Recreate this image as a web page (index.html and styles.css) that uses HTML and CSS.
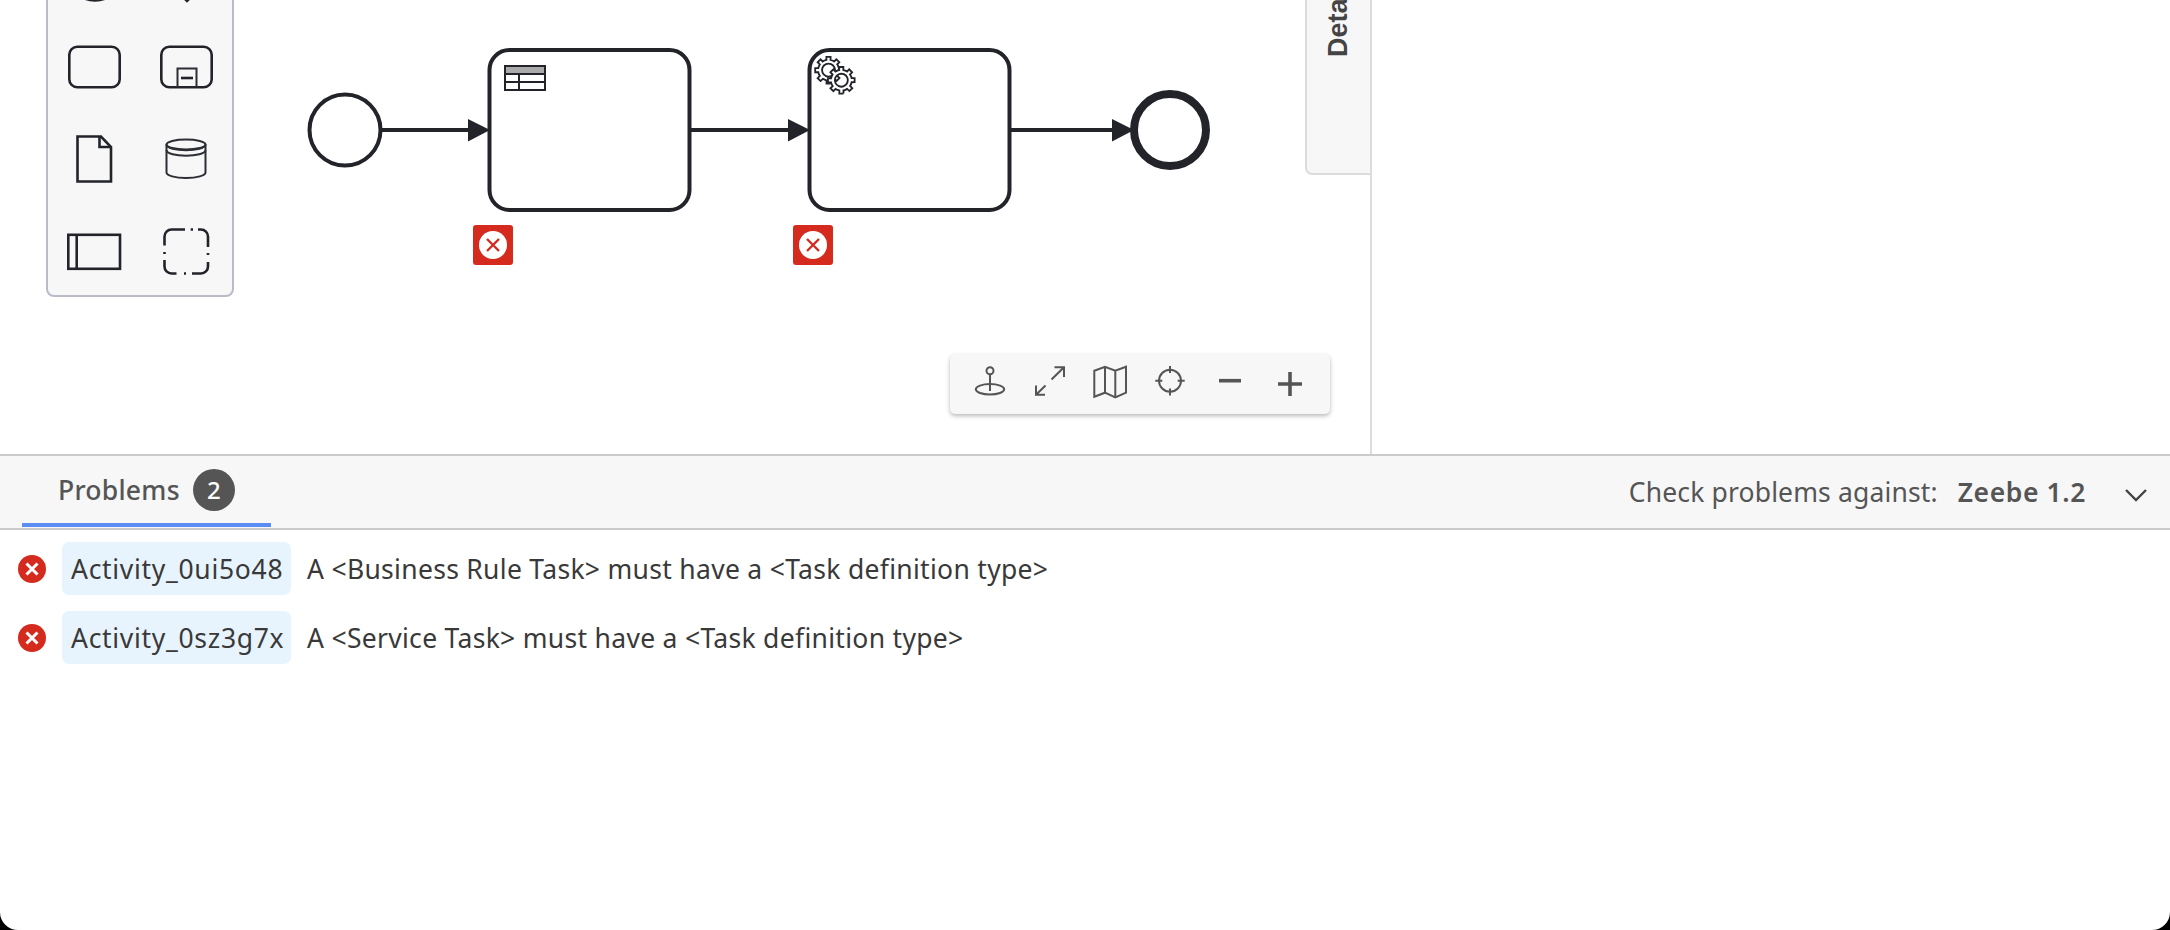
FILE: index.html
```html
<!DOCTYPE html>
<html lang="en">
<head>
<meta charset="utf-8">
<title>Problems</title>
<link rel="stylesheet" href="styles.css">
</head>
<body>
<div class="app">
  <div class="workspace">
    <section class="canvas">
      <svg class="diagram" width="1370" height="454" viewBox="0 0 1370 454">
        <circle class="shape" cx="345" cy="130" r="35.5"/>
        <path class="flow" d="M381 130H470"/>
        <path class="arrow" d="M468 119L490 130L468 141.5Z"/>
        <rect class="shape" x="489.5" y="50" width="200" height="160" rx="20"/>
        <rect class="thin" x="505" y="66" width="40" height="24"/>
        <rect class="head" x="506" y="67" width="38" height="7"/>
        <path class="thin" d="M505 74H545M505 82H545M519 74V90"/>
        <path class="flow" d="M690 130H790"/>
        <path class="arrow" d="M788 119L810 130L788 141.5Z"/>
        <rect class="shape" x="809.5" y="50" width="200" height="160" rx="20"/>
        <g class="gear" transform="translate(830.65 83.5) scale(1.85)"><path d="m0 0v-1.71335c.352326-.0705.703932-.17838 1.047628-.32133.344416-.14465.665822-.32133.966377-.52145l1.19431 1.18005 1.567487-1.57688-1.195028-1.18014c.403376-.61394.683079-1.29908.825447-2.01824l1.622133-.01v-2.2196l-1.636514.01c-.07333-.35153-.178319-.70024-.323564-1.04372-.145244-.34406-.321407-.6644-.522735-.96217l1.131035-1.13631-1.583305-1.56293-1.129598 1.13589c-.614052-.40108-1.302883-.68093-2.022633-.82247l.0093-1.61852h-2.241173l.0042 1.63124c-.353763.0736-.705369.17977-1.049785.32371-.344415.14437-.665102.32092-.9635006.52046l-1.1698628-1.15823-1.5667691 1.5792 1.1684265 1.15669c-.4026573.61283-.68308 1.29797-.8247287 2.01713l-1.6588041.003v2.22174l1.6724648-.006c.073327.35077.1797598.70243.3242851 1.04472.1452428.34448.3214064.6644.5227339.96066l-1.1993431 1.19723 1.5840256 1.56011 1.1964668-1.19348c.6140517.40346 1.3028827.68232 2.0233517.82331l.000719 1.69892h2.226848zm.221462-3.9957c-1.788948.7502-3.8576-.0928-4.6097055-1.87438-.7521065-1.78321.090598-3.84627 1.8802645-4.59604 1.78823-.74936 3.856881.0929 4.608987 1.87437.752106 1.78165-.0906 3.84612-1.879546 4.59605z"/></g>
        <g class="gear" transform="translate(843.45 93.6) scale(1.85)"><path d="m0 0v-1.71335c.352326-.0705.703932-.17838 1.047628-.32133.344416-.14465.665822-.32133.966377-.52145l1.19431 1.18005 1.567487-1.57688-1.195028-1.18014c.403376-.61394.683079-1.29908.825447-2.01824l1.622133-.01v-2.2196l-1.636514.01c-.07333-.35153-.178319-.70024-.323564-1.04372-.145244-.34406-.321407-.6644-.522735-.96217l1.131035-1.13631-1.583305-1.56293-1.129598 1.13589c-.614052-.40108-1.302883-.68093-2.022633-.82247l.0093-1.61852h-2.241173l.0042 1.63124c-.353763.0736-.705369.17977-1.049785.32371-.344415.14437-.665102.32092-.9635006.52046l-1.1698628-1.15823-1.5667691 1.5792 1.1684265 1.15669c-.4026573.61283-.68308 1.29797-.8247287 2.01713l-1.6588041.003v2.22174l1.6724648-.006c.073327.35077.1797598.70243.3242851 1.04472.1452428.34448.3214064.6644.5227339.96066l-1.1993431 1.19723 1.5840256 1.56011 1.1964668-1.19348c.6140517.40346 1.3028827.68232 2.0233517.82331l.000719 1.69892h2.226848zm.221462-3.9957c-1.788948.7502-3.8576-.0928-4.6097055-1.87438-.7521065-1.78321.090598-3.84627 1.8802645-4.59604 1.78823-.74936 3.856881.0929 4.608987 1.87437.752106 1.78165-.0906 3.84612-1.879546 4.59605z"/></g>
        <path class="flow" d="M1010 130H1114"/>
        <path class="arrow" d="M1112 119L1134 130L1112 141.5Z"/>
        <circle class="shape end" cx="1170" cy="130" r="36"/>
        <rect class="badge" x="473" y="225" width="40" height="40" rx="3"/>
        <circle class="badge-dot" cx="493" cy="245" r="14"/>
        <path class="badge-x" d="M487 239L499 251M499 239L487 251"/>
        <rect class="badge" x="793" y="225" width="40" height="40" rx="3"/>
        <circle class="badge-dot" cx="813" cy="245" r="14"/>
        <path class="badge-x" d="M807 239L819 251M819 239L807 251"/>
      </svg>

      <div class="palette">
        <svg class="tool" viewBox="0 0 60 60"><circle cx="30" cy="30" r="26.5"/></svg>
        <svg class="tool" viewBox="0 0 60 60"><path d="M30 5L57 30L30 57L3 30Z"/></svg>
        <svg class="tool" viewBox="0 0 60 60"><rect x="4.3" y="9.8" width="50.4" height="40.4" rx="8"/></svg>
        <svg class="tool" viewBox="0 0 60 60"><rect x="4.3" y="9.8" width="50.4" height="40.4" rx="8"/><path class="hair" d="M20.5 50V31.5H39.5V50"/><path d="M24 41H36"/></svg>
        <svg class="tool" viewBox="0 0 60 60"><path d="M12.5 7.5H36L46 18V52.5H12.5Z"/><path d="M34.5 7.5V18H46"/></svg>
        <svg class="tool" viewBox="0 0 60 60"><path class="hair" d="M9.5 15.5V43.5C9.5 46.5 18 49 29 49S48.5 46.5 48.5 43.5V15.5"/><ellipse class="hair" cx="29" cy="15.5" rx="19.5" ry="5"/><path class="hair" d="M9.5 15.5C9.5 23 48.5 23 48.5 15.5M9.5 21C9.5 28.5 48.5 28.5 48.5 21"/></svg>
        <svg class="tool" viewBox="0 0 60 60"><rect x="3.3" y="12.8" width="51.7" height="34"/><path d="M11.7 12.8V46.8"/></svg>
        <svg class="tool" viewBox="0 0 60 60"><path d="M7.5 23.5V14.5a7 7 0 0 1 7-7H28M33.7 7.5H36M41 7.5H44a7 7 0 0 1 7 7V25M51 31V33M51 40V44.5a7 7 0 0 1-7 7H35M27 51.5H29M19.5 51.5H14.5a7 7 0 0 1-7-7V38M7.5 30V32"/></svg>
      </div>

      <div class="details-tab"><span class="details-label">Details</span></div>

      <div class="toolbar">
        <button class="tbtn"><svg viewBox="0 0 40 40"><circle cx="20" cy="6.7" r="3.5"/><path d="M20 10.2V27"/><ellipse cx="20" cy="25.3" rx="14.2" ry="5.2"/></svg></button>
        <button class="tbtn"><svg viewBox="0 0 40 40"><path d="M6 30.7L15.5 21.5M6 21.5V30.7H15M34 3.3L21.5 15.5M24.5 3.3H34V13"/></svg></button>
        <button class="tbtn"><svg viewBox="0 0 40 40"><path d="M4.3 6.7L15 2.7L25.3 6.7L36 2.7V28.7L25.3 33.3L15 28.7L4.3 32.7ZM15 2.7V28.7M25.3 6.7V33.3"/></svg></button>
        <button class="tbtn"><svg viewBox="0 0 40 40"><circle cx="20" cy="16.7" r="11"/><path d="M20 2V9M20 24.4V31.4M5.3 16.7H12.3M27.7 16.7H34.7"/></svg></button>
        <button class="tbtn"><svg viewBox="0 0 40 40"><path class="heavy" d="M9 16.7H31"/></svg></button>
        <button class="tbtn"><svg viewBox="0 0 40 40"><path class="heavy" d="M8 20H32M20 8V32"/></svg></button>
      </div>
    </section>
    <aside class="side"></aside>
  </div>

  <section class="panel">
    <header class="panel-head">
      <div class="tab">
        <span class="tab-title">Problems</span>
        <span class="count">2</span>
      </div>
      <div class="target">
        <span class="target-label">Check problems against:</span>
        <span class="target-value">Zeebe 1.2</span>
        <svg class="chevron" viewBox="0 0 22 14"><path d="M1 2L11 12L21 2"/></svg>
      </div>
    </header>
    <ul class="list">
      <li class="row">
        <svg class="err" viewBox="0 0 28 28"><circle cx="14" cy="14" r="14"/><path d="M8.5 8.5L19.5 19.5M19.5 8.5L8.5 19.5"/></svg>
        <span class="pill">Activity_0ui5o48</span>
        <span class="msg">A &lt;Business Rule Task&gt; must have a &lt;Task definition type&gt;</span>
      </li>
      <li class="row">
        <svg class="err" viewBox="0 0 28 28"><circle cx="14" cy="14" r="14"/><path d="M8.5 8.5L19.5 19.5M19.5 8.5L8.5 19.5"/></svg>
        <span class="pill">Activity_0sz3g7x</span>
        <span class="msg">A &lt;Service Task&gt; must have a &lt;Task definition type&gt;</span>
      </li>
    </ul>
  </section>
</div>
</body>
</html>
```
FILE: styles.css
```css
* { box-sizing: border-box; }
html, body { margin: 0; height: 100%; background: #000; overflow: hidden; }
body { font-family: "Noto Sans", "Open Sans", sans-serif; color: #393939; }

.app {
  height: 930px;
  display: flex;
  flex-direction: column;
  background: #fff;
  border-radius: 0 0 18px 18px;
  overflow: hidden;
}

.workspace { height: 454px; display: flex; flex: none; }
.canvas { position: relative; width: 1372px; flex: none; border-right: 2px solid #dcdcdc; overflow: hidden; }
.side { flex: 1; background: #fff; }

.diagram { display: block; }
.shape { fill: #fff; stroke: #22242a; stroke-width: 4; }
.end { stroke-width: 8; }
.flow { fill: none; stroke: #22242a; stroke-width: 4; }
.arrow { fill: #22242a; }
.thin { fill: none; stroke: #22242a; stroke-width: 2; }
.head { fill: #aaa; }
.gear path { fill: #fff; stroke: #22242a; stroke-width: 1; }
.badge { fill: #d52b1e; }
.badge-dot { fill: #fff; }
.badge-x { fill: none; stroke: #d52b1e; stroke-width: 2.4; }

.palette {
  position: absolute;
  left: 46px;
  top: -74px;
  width: 188px;
  height: 371px;
  display: grid;
  grid-template-columns: 93px 91px;
  grid-auto-rows: 92.5px;
  place-items: center;
  background: #f7f7f8;
  border: 2px solid #b9bcc8;
  border-radius: 8px;
  overflow: hidden;
}
.tool { width: 60px; height: 60px; overflow: visible; }
.tool * { fill: none; stroke: #22242a; stroke-width: 2.6; }
.tool .hair { stroke-width: 2; stroke: #2c2e34; }

.details-tab {
  position: absolute;
  left: 1305px;
  top: -60px;
  width: 65px;
  height: 235px;
  display: flex;
  justify-content: center;
  align-items: flex-start;
  background: #f7f7f8;
  border: 2px solid #dcdcdc;
  border-right: 0;
  border-radius: 0 0 0 7px;
}
.details-label {
  writing-mode: vertical-rl;
  transform: rotate(180deg);
  height: 115px;
  font: 700 27px "Liberation Sans", sans-serif;
  color: #444;
  white-space: nowrap;
  text-align: left;
}

.toolbar {
  position: absolute;
  left: 950px;
  top: 354px;
  width: 380px;
  height: 60px;
  padding: 0 10px;
  display: flex;
  background: #f7f7f8;
  border-radius: 5px;
  box-shadow: 0 2px 4px rgba(0, 0, 0, .28);
}
.tbtn { width: 60px; height: 60px; padding: 0; border: 0; background: none; display: flex; align-items: center; justify-content: center; }
.tbtn svg { width: 40px; height: 40px; }
.tbtn svg * { fill: none; stroke: #555; stroke-width: 2; }
.tbtn svg .heavy { stroke-width: 3.6; }

.panel { flex: 1; border-top: 2px solid #cbcbcb; display: flex; flex-direction: column; }
.panel-head {
  height: 74px;
  flex: none;
  display: flex;
  align-items: stretch;
  background: #f7f7f7;
  border-bottom: 2px solid #cbcbcb;
  margin-bottom: 12px;
}
.tab {
  width: 249px;
  margin: 0 0 1px 22px;
  padding-left: 36px;
  display: flex;
  align-items: center;
  gap: 13px;
  border-bottom: 4px solid #5b8ef5;
}
.tab-title { font-size: 26.5px; font-weight: 500; letter-spacing: .25px; color: #555; }
.count {
  width: 42px;
  height: 42px;
  border-radius: 50%;
  background: #555;
  color: #fff;
  font-size: 24px;
  font-weight: 500;
  display: flex;
  align-items: center;
  justify-content: center;
}
.target { margin-left: auto; display: flex; align-items: center; padding-right: 84px; position: relative; }
.target-label { font-size: 26.5px; letter-spacing: .14px; color: #555; }
.target-value { margin-left: 20px; font-size: 26.5px; font-weight: 600; letter-spacing: .6px; color: #555; }
.chevron { position: absolute; right: 23px; top: 32px; width: 22px; height: 14px; }
.chevron path { fill: none; stroke: #444; stroke-width: 2.4; }

.list { list-style: none; margin: 0; padding: 0; display: flex; flex-direction: column; gap: 16px; }
.row { display: flex; align-items: center; height: 53px; padding-left: 18px; font-size: 26.5px; color: #393939; }
.err { width: 28px; height: 28px; flex: none; }
.err circle { fill: #d52b1e; }
.err path { fill: none; stroke: #fff; stroke-width: 3; }
.pill {
  margin-left: 16px;
  width: 229px;
  height: 53px;
  padding-left: 9px;
  display: flex;
  align-items: center;
  background: #e8f4fd;
  border-radius: 7px;
  white-space: nowrap;
  letter-spacing: .7px;
}
.msg { margin-left: 16px; white-space: nowrap; letter-spacing: .3px; }
```
